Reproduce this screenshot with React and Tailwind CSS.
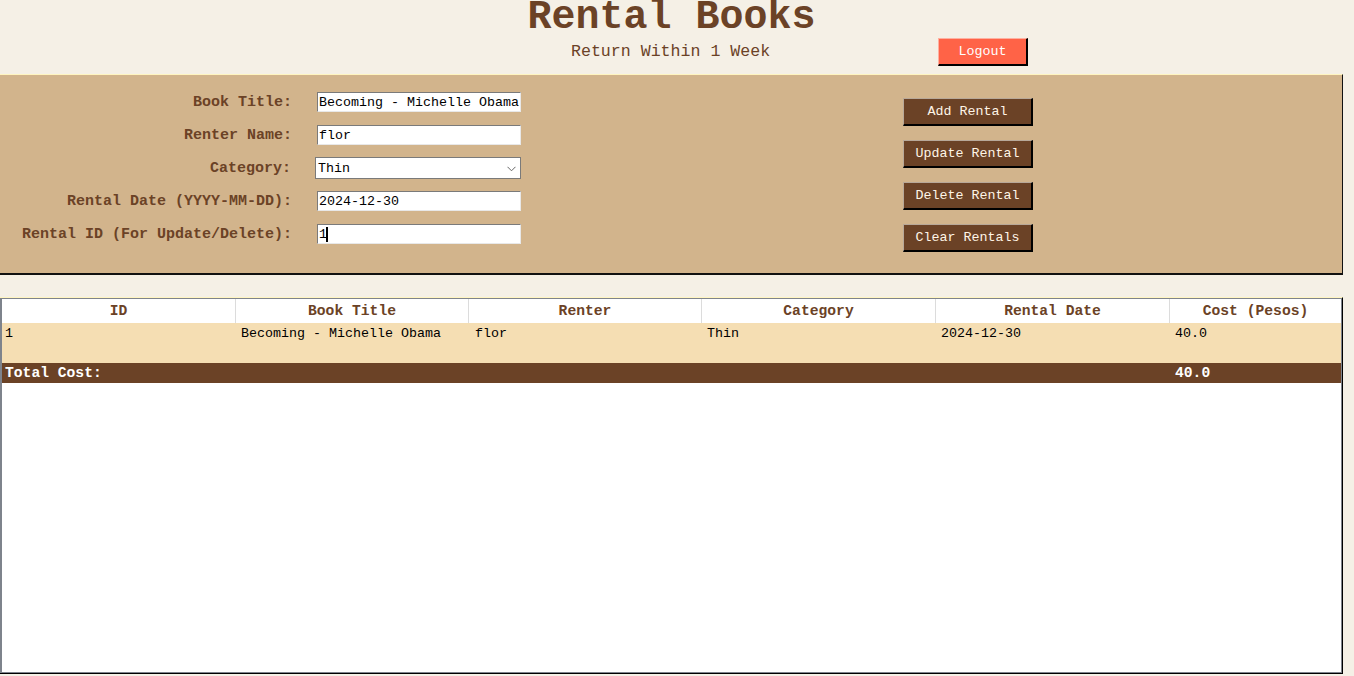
import React from "react";

const mono = { fontFamily: '"Liberation Mono", "Courier New", monospace' };

function Field({ label, children }) {
  return (
    <div className="flex items-center h-[20px] mb-[13px]">
      <div className="w-[292px] text-right text-[15px] font-bold text-[#6B4226] leading-[20px] whitespace-nowrap pt-[2px]">
        {label}
      </div>
      <div className="ml-[25px]">{children}</div>
    </div>
  );
}

function TextBox({ value, caret }) {
  return (
    <div className="w-[204px] h-[20px] bg-white border-t border-l border-[#7a7a7a] border-b border-r border-b-[#e8e8e8] border-r-[#e8e8e8] flex items-center pl-[1px] pt-[2px] text-[13.33px] text-black leading-[16px] whitespace-nowrap overflow-hidden">
      <span>{value}</span>
      {caret && <span className="inline-block w-[2px] h-[15px] bg-black -ml-[1px] -mt-[2px]" />}
    </div>
  );
}

function Btn({ children }) {
  return (
    <div className="w-[130px] h-[28px] bg-[#6B4226] border-t border-l border-[#b8a898] border-b-2 border-r-2 border-b-black border-r-black flex items-center justify-center text-[13.33px] text-[#FFF5E6] leading-none pt-[1px]">
      {children}
    </div>
  );
}

export default function App() {
  const cols = ["ID", "Book Title", "Renter", "Category", "Rental Date", "Cost (Pesos)"];
  const row = ["1", "Becoming - Michelle Obama", "flor", "Thin", "2024-12-30", "40.0"];
  const colCls = [
    "w-[234px] pl-[3px]",
    "w-[233px] pl-[5px]",
    "w-[233px] pl-[6px]",
    "w-[234px] pl-[5px]",
    "w-[234px] pl-[5px]",
    "flex-1 pl-[5px]",
  ];
  const headW = ["w-[234px]", "w-[233px]", "w-[233px]", "w-[234px]", "w-[234px]", "flex-1"];
  return (
    <div className="w-full h-[676px] bg-[#F5F0E6] overflow-hidden" style={mono}>
      <div className="w-[1343px]">
        {/* Header */}
        <div className="h-[74px] flex flex-col">
          <div className="h-[36px] text-center text-[40px] font-bold leading-[36px] text-[#6B4226] whitespace-nowrap">
            Rental Books
          </div>
          <div className="mt-[2px] h-[28px] flex items-center pl-[571px]">
            <div className="w-[200px] text-[16.6px] leading-[28px] text-[#6B4226] whitespace-nowrap -mt-[1px]">
              Return Within 1 Week
            </div>
            <div className="ml-[167px] w-[90px] h-[28px] bg-[#FF6347] border-t border-l border-[#ffb0a0] border-b-2 border-r-2 border-b-black border-r-black flex items-center justify-center text-[13.33px] text-white leading-none pt-[1px]">
              Logout
            </div>
          </div>
        </div>

        {/* Form panel */}
        <div className="h-[201px] bg-[#D2B48C] border-t border-t-[#fff5c0] border-b-2 border-b-[#111] border-r border-r-[#111] flex">
          <div className="pt-[17px] w-[521px]">
            <Field label="Book Title:">
              <TextBox value="Becoming - Michelle Obama" />
            </Field>
            <Field label="Renter Name:">
              <TextBox value="flor" />
            </Field>
            <Field label="Category:">
              <div className="-ml-[1px] -my-[1px] w-[206px] h-[22px] bg-white border border-[#7a7a7a] flex items-center justify-between pl-[2px] pr-[4px] pt-[1px] text-[13.33px] text-black">
                <span>Thin</span>
                <svg width="9" height="6" viewBox="0 0 9 6" fill="none">
                  <path d="M0.5 0.8 L4.5 4.8 L8.5 0.8" stroke="#666" strokeWidth="1" />
                </svg>
              </div>
            </Field>
            <Field label="Rental Date (YYYY-MM-DD):">
              <TextBox value="2024-12-30" />
            </Field>
            <Field label="Rental ID (For Update/Delete):">
              <TextBox value="1" caret />
            </Field>
          </div>
          <div className="ml-[382px] pt-[23px] flex flex-col gap-[14px]">
            <Btn>Add Rental</Btn>
            <Btn>Update Rental</Btn>
            <Btn>Delete Rental</Btn>
            <Btn>Clear Rentals</Btn>
          </div>
        </div>

        {/* Table */}
        <div className="mt-[22px] h-[377px] border-t border-t-[#fff5c0] border-r border-r-black border-b border-b-black flex flex-col">
          <div className="flex-1 bg-white border-l-2 border-t border-r border-b border-[#7e838c] flex flex-col">
            <div className="h-[24px] flex">
              {cols.map((c, i) => (
                <div
                  key={c}
                  className={
                    (i < 5 ? "border-r border-r-[#dcdcdc] " : "") +
                    headW[i] +
                    " text-center text-[14.67px] font-bold text-[#6B4226] leading-[24px] whitespace-nowrap"
                  }
                >
                  {c}
                </div>
              ))}
            </div>
            <div className="h-[40px] bg-[#F5DEB3] flex pt-[3px]">
              {row.map((v, i) => (
                <div key={i} className={colCls[i] + " text-[13.33px] text-black leading-[16px] whitespace-nowrap"}>
                  {v}
                </div>
              ))}
            </div>
            <div className="h-[20px] bg-[#6B4226] flex text-[14.67px] font-bold text-white leading-[20px]">
              <div className="w-[1168px] pl-[3px]">Total Cost:</div>
              <div className="flex-1 pl-[5px]">40.0</div>
            </div>
          </div>
        </div>
      </div>
    </div>
  );
}
